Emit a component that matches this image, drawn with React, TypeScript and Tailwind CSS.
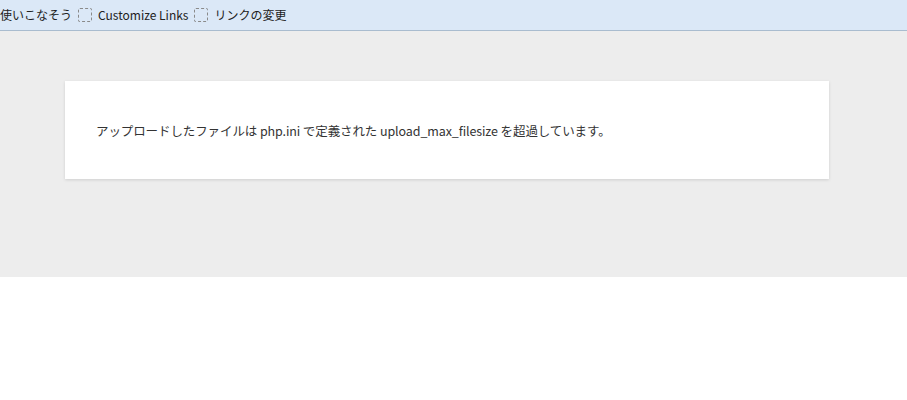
function Box() {
  return (
    <span className="inline-block w-[14px] h-[14px] border border-dashed border-[#8a8a8a] rounded-[2px] mx-[6px] align-middle" />
  );
}

export default function App() {
  return (
    <div className="w-full bg-white font-['Meiryo','Noto_Sans_CJK_JP',sans-serif]">
      {/* ツールバー */}
      <div className="h-[31px] bg-[#dbe8f7] border-b border-[#a9bccf] flex items-center text-[12px] text-[#222] whitespace-nowrap overflow-hidden">
        <span>使いこなそう</span>
        <Box />
        <span>Customize Links</span>
        <Box />
        <span>リンクの変更</span>
      </div>

      {/* エラー表示 */}
      <div className="bg-[#ededed] h-[246px] pt-[50px] px-[65px]">
        <div className="w-[764px] h-[98px] bg-white shadow-[0_1px_3px_rgba(0,0,0,0.13)] flex items-center px-[31px] pt-[3px]">
          <p className="text-[12.5px] text-[#333] tracking-[-0.1px]">
            アップロードしたファイルは php.ini で定義された upload_max_filesize を超過しています。
          </p>
        </div>
      </div>
    </div>
  );
}
